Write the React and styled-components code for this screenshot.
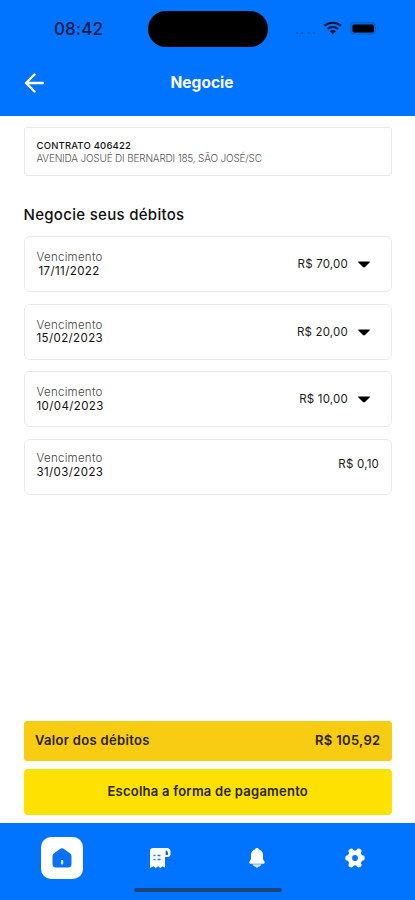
import React from 'react'
import styled, { createGlobalStyle } from 'styled-components'

const debts = [
	{ date: '17/11/2022', amount: 'R$ 70,00', expandable: true, indent: 2 },
	{ date: '15/02/2023', amount: 'R$ 20,00', expandable: true },
	{ date: '10/04/2023', amount: 'R$ 10,00', expandable: true },
	{ date: '31/03/2023', amount: 'R$ 0,10', expandable: false }
]

const App = () => {
	function renderDebts() {
		return debts.map((debt) => (
			<DebtCard key={ debt.date }>
				<DueDate $raised={ !debt.expandable }>
					<DueLabel>Vencimento</DueLabel>
					<DueValue $indent={ debt.indent }>{ debt.date }</DueValue>
				</DueDate>
				<Amount $raised={ !debt.expandable }>
					{ debt.amount }
					{ debt.expandable && <Caret viewBox="0 0 12 7"><path d="M.8.5h10.4c.7 0 .9.7.4 1.1L7 6.100c-.6.5-1.400.5-2 0L.4 1.600C-.1 1.200.1.5.8.5z" /></Caret> }
				</Amount>
			</DebtCard>
		))
	}

	return (
		<Screen>
			<GlobalStyle />
			<Header>
				<StatusBar>
					<Clock>08:42</Clock>
					<Island />
					<StatusIcons />
				</StatusBar>
				<TitleBar>
					<BackIcon />
					<Title>Negocie</Title>
				</TitleBar>
			</Header>
			<Content>
				<Contract>
					<ContractNumber>CONTRATO 406422</ContractNumber>
					<Address>AVENIDA JOSUÉ DI BERNARDI 185, SÃO JOSÉ/SC</Address>
				</Contract>
				<Heading>Negocie seus débitos</Heading>
				<DebtList>{ renderDebts() }</DebtList>
				<Footer>
					<Total>
						<span>Valor dos débitos</span>
						<span>R$ 105,92</span>
					</Total>
					<PayButton>Escolha a forma de pagamento</PayButton>
				</Footer>
			</Content>
			<TabBar>
				<Tab $active><HomeIcon /></Tab>
				<Tab><InvoiceIcon /></Tab>
				<Tab><BellIcon /></Tab>
				<Tab><GearIcon /></Tab>
				<HomeIndicator />
			</TabBar>
		</Screen>
	)
}

export default App

const StatusIcons = () => (
	<StatusSvg viewBox="0 0 88 16">
		<g fill="#0756b8">
			<circle cx="4" cy="12" r="1.100" />
			<circle cx="9.500" cy="12" r="1.100" />
			<circle cx="15.500" cy="12" r="1.100" />
			<circle cx="21" cy="12" r="1.100" />
		</g>
		<g fill="none" stroke="#00142f" strokeWidth="2">
			<path d="M31.500 4.800c4.500-4.200 12-4.200 16.500 0" />
			<path d="M34.500 8c3-2.700 7.500-2.700 10.500 0" />
		</g>
		<path d="M36.800 10.200c1.700-1.500 4.300-1.500 6 0l-3 3z" fill="#00142f" />
		<rect x="57.500" y="1.500" width="25" height="11.500" rx="3.500" fill="#0866dc" stroke="#0860ca" />
		<rect x="59.500" y="3.500" width="21.500" height="8" rx="1.800" fill="#000" />
		<path d="M84.500 5.300c2 .5 2 3.400 0 3.900z" fill="#0860ca" />
	</StatusSvg>
)

const BackIcon = () => (
	<BackSvg viewBox="0 0 20 20">
		<path d="M18.800 10H2M10.500 1.500 2 10l8.500 8.500" />
	</BackSvg>
)

const HomeIcon = () => (
	<Icon viewBox="0 0 20 20" $active>
		<path d="M8.300.8c1-.7 2.300-.7 3.400 0l6.200 4.500c1 .7 1.600 1.900 1.600 3.100V16a3.500 3.500 0 0 1-3.500 3.500H4A3.500 3.500 0 0 1 .5 16V8.400c0-1.200.6-2.400 1.600-3.100z" />
		<rect x="9" y="12" width="2.200" height="4.500" rx=".8" fill="#d5e6ff" />
	</Icon>
)

const InvoiceIcon = () => (
	<Icon viewBox="0 0 20 20">
		<path d="M3 0h14a3.500 3.500 0 0 1 3.500 4v2.500c0 1.500-1.200 2.500-3 2.500H15v10.800l-2.300-1.500-2.400 1.700-2.300-1.700-2.300 1.700-2.200-1.700L0 20V3a3 3 0 0 1 3-3z" />
		<path d="M3.500 7.500h2M7.500 7.500h3M3.500 11.500h2M7.500 11.500h3" stroke="#2d73eb" strokeWidth="1.500" />
		<path d="M15.700 2.300c1.500.4 2.400 1.700 2.400 3.600 0 .8-.6 1.200-2.400 1.200z" fill="#1460df" />
	</Icon>
)

const BellIcon = () => (
	<Icon viewBox="0 0 20 20">
		<path d="M10 0c1 0 1.700.5 1.900 1.200 2.700.9 4.100 3 4.100 6v3.600c0 .7 1.700 2.600 1.700 3.600 0 .9-.6 1.300-1.500 1.300H3.800c-.9 0-1.500-.4-1.500-1.300 0-1 1.700-2.900 1.700-3.600V7.200c0-3 1.400-5.100 4.100-6C8.300.5 9 0 10 0z" />
		<path d="M5.500 16.200h9c-.7 1.600-1.700 2.200-3 2.600L10 20l-1.500-1.200c-1.300-.4-2.300-1-3-2.600z" fill="#d6e3ff" />
	</Icon>
)

const GearIcon = () => (
	<Icon viewBox="0 0 20 20">
		<g stroke="#fff" strokeWidth="5.300" strokeLinecap="round">
			<path d="M2.900 10h14.200M6.200 3.200l7.600 13.600M13.800 3.200 6.200 16.800" />
		</g>
		<circle cx="10" cy="10" r="7.600" />
		<circle cx="10" cy="10" r="2.900" fill="#0073ff" />
	</Icon>
)

const GlobalStyle = createGlobalStyle`
	* {
		box-sizing: border-box;
	}

	body {
		margin: 0;
		background: #fff;
		font-family: Inter, sans-serif;
	}
`

const Screen = styled.div`
	width: 415px;
	height: 900px;
	display: flex;
	flex-direction: column;
	background: #fff;
	overflow: hidden;
`

const Header = styled.header`
	height: 116px;
	flex-shrink: 0;
	background: #0073ff;
`

const StatusBar = styled.div`
	height: 58px;
	padding-top: 11px;
	display: grid;
	grid-template-columns: 148px 120px 1fr;
`

const Clock = styled.div`
	padding-left: 54px;
	font-size: 17px;
	line-height: 36px;
	font-weight: 500;
	letter-spacing: 0.1px;
	color: #001b40;
`

const Island = styled.div`
	height: 36px;
	border-radius: 18px;
	background: #000;
`

const StatusSvg = styled.svg`
	width: 88px;
	height: 16px;
	margin: 10px 0 0 25px;
`

const TitleBar = styled.div`
	height: 49px;
	padding: 0 24px;
	display: grid;
	grid-template-columns: 20px 1fr 31px;
	align-items: center;
`

const BackSvg = styled.svg`
	width: 20px;
	height: 20px;
	fill: none;
	stroke: #fff;
	stroke-width: 2.4;
	stroke-linecap: round;
	stroke-linejoin: round;
`

const Title = styled.h1`
	margin: 0;
	text-align: center;
	font-size: 15.500px;
	line-height: 19px;
	font-weight: 700;
	color: #fff;
`

const Content = styled.main`
	flex: 1;
	padding: 11px 23px 8px 23.500px;
	display: flex;
	flex-direction: column;
`

const Contract = styled.section`
	height: 49px;
	padding: 11px 12px;
	border: 1px solid #e9e9e9;
	border-radius: 3px;
`

const ContractNumber = styled.div`
	font-size: 9.500px;
	line-height: 13px;
	font-weight: 500;
	letter-spacing: 0.19px;
	color: #151515;
`

const Address = styled.div`
	font-size: 10px;
	line-height: 13px;
	font-weight: 300;
	letter-spacing: -0.18px;
	color: #555;
`

const Heading = styled.h2`
	margin: 29px 0 11px;
	font-size: 15px;
	line-height: 20px;
	font-weight: 500;
	letter-spacing: 0.3px;
	color: #111;
`

const DebtList = styled.div`
	display: flex;
	flex-direction: column;
	gap: 11.500px;
`

const DebtCard = styled.article`
	height: 56px;
	padding: 0 12px;
	display: flex;
	justify-content: space-between;
	border: 1px solid #e9e9e9;
	border-radius: 6px;
`

const DueDate = styled.div`
	padding-top: ${ props => props.$raised ? '12.500px' : '14px' };
	font-size: 11.500px;
	line-height: 13.500px;
	letter-spacing: 0.28px;
`

const DueLabel = styled.div`
	font-weight: 300;
	color: #444;
`

const DueValue = styled.div`
	padding-left: ${ props => props.$indent || 0 }px;
	font-weight: 400;
	letter-spacing: 0.4px;
	color: #111;
`

const Amount = styled.div`
	height: ${ props => props.$raised ? '49px' : '54px' };
	display: flex;
	align-items: center;
	font-size: 11.500px;
	letter-spacing: 0.2px;
	color: #1a1a1a;
`

const Caret = styled.svg`
	width: 12px;
	height: 7px;
	margin: 1px 9px 0 10px;
	fill: #000;
`

const Footer = styled.footer`
	margin-top: auto;
	display: flex;
	flex-direction: column;
	gap: 8px;
`

const Total = styled.div`
	height: 40px;
	padding: 0 11.500px 2px;
	display: flex;
	align-items: center;
	justify-content: space-between;
	background: #f8cc12;
	border-radius: 3px;
	font-size: 13px;
	font-weight: 600;
	letter-spacing: 0.32px;
	color: #2a2206;
`

const PayButton = styled.button`
	height: 46px;
	padding: 0 0 2px;
	border: 0;
	border-radius: 4px;
	background: #ffe100;
	font-family: inherit;
	font-size: 13px;
	font-weight: 600;
	letter-spacing: 0.24px;
	color: #2a2500;
`

const TabBar = styled.nav`
	height: 77px;
	flex-shrink: 0;
	position: relative;
	padding: 14px 13.500px 0;
	display: grid;
	grid-template-columns: repeat(4, 97.500px);
	justify-items: center;
	align-items: start;
	background: #0073ff;
`

const Tab = styled.div`
	width: 42px;
	height: 42px;
	display: flex;
	align-items: center;
	justify-content: center;
	border-radius: 10px;
	background: ${ props => props.$active ? '#fff' : 'transparent' };
`

const Icon = styled.svg`
	width: 20px;
	height: 20px;
	overflow: visible;
	fill: ${ props => props.$active ? '#0871f4' : '#fff' };
`

const HomeIndicator = styled.div`
	position: absolute;
	left: 134px;
	bottom: 8px;
	width: 148px;
	height: 4px;
	border-radius: 2px;
	background: #1b4478;
`
